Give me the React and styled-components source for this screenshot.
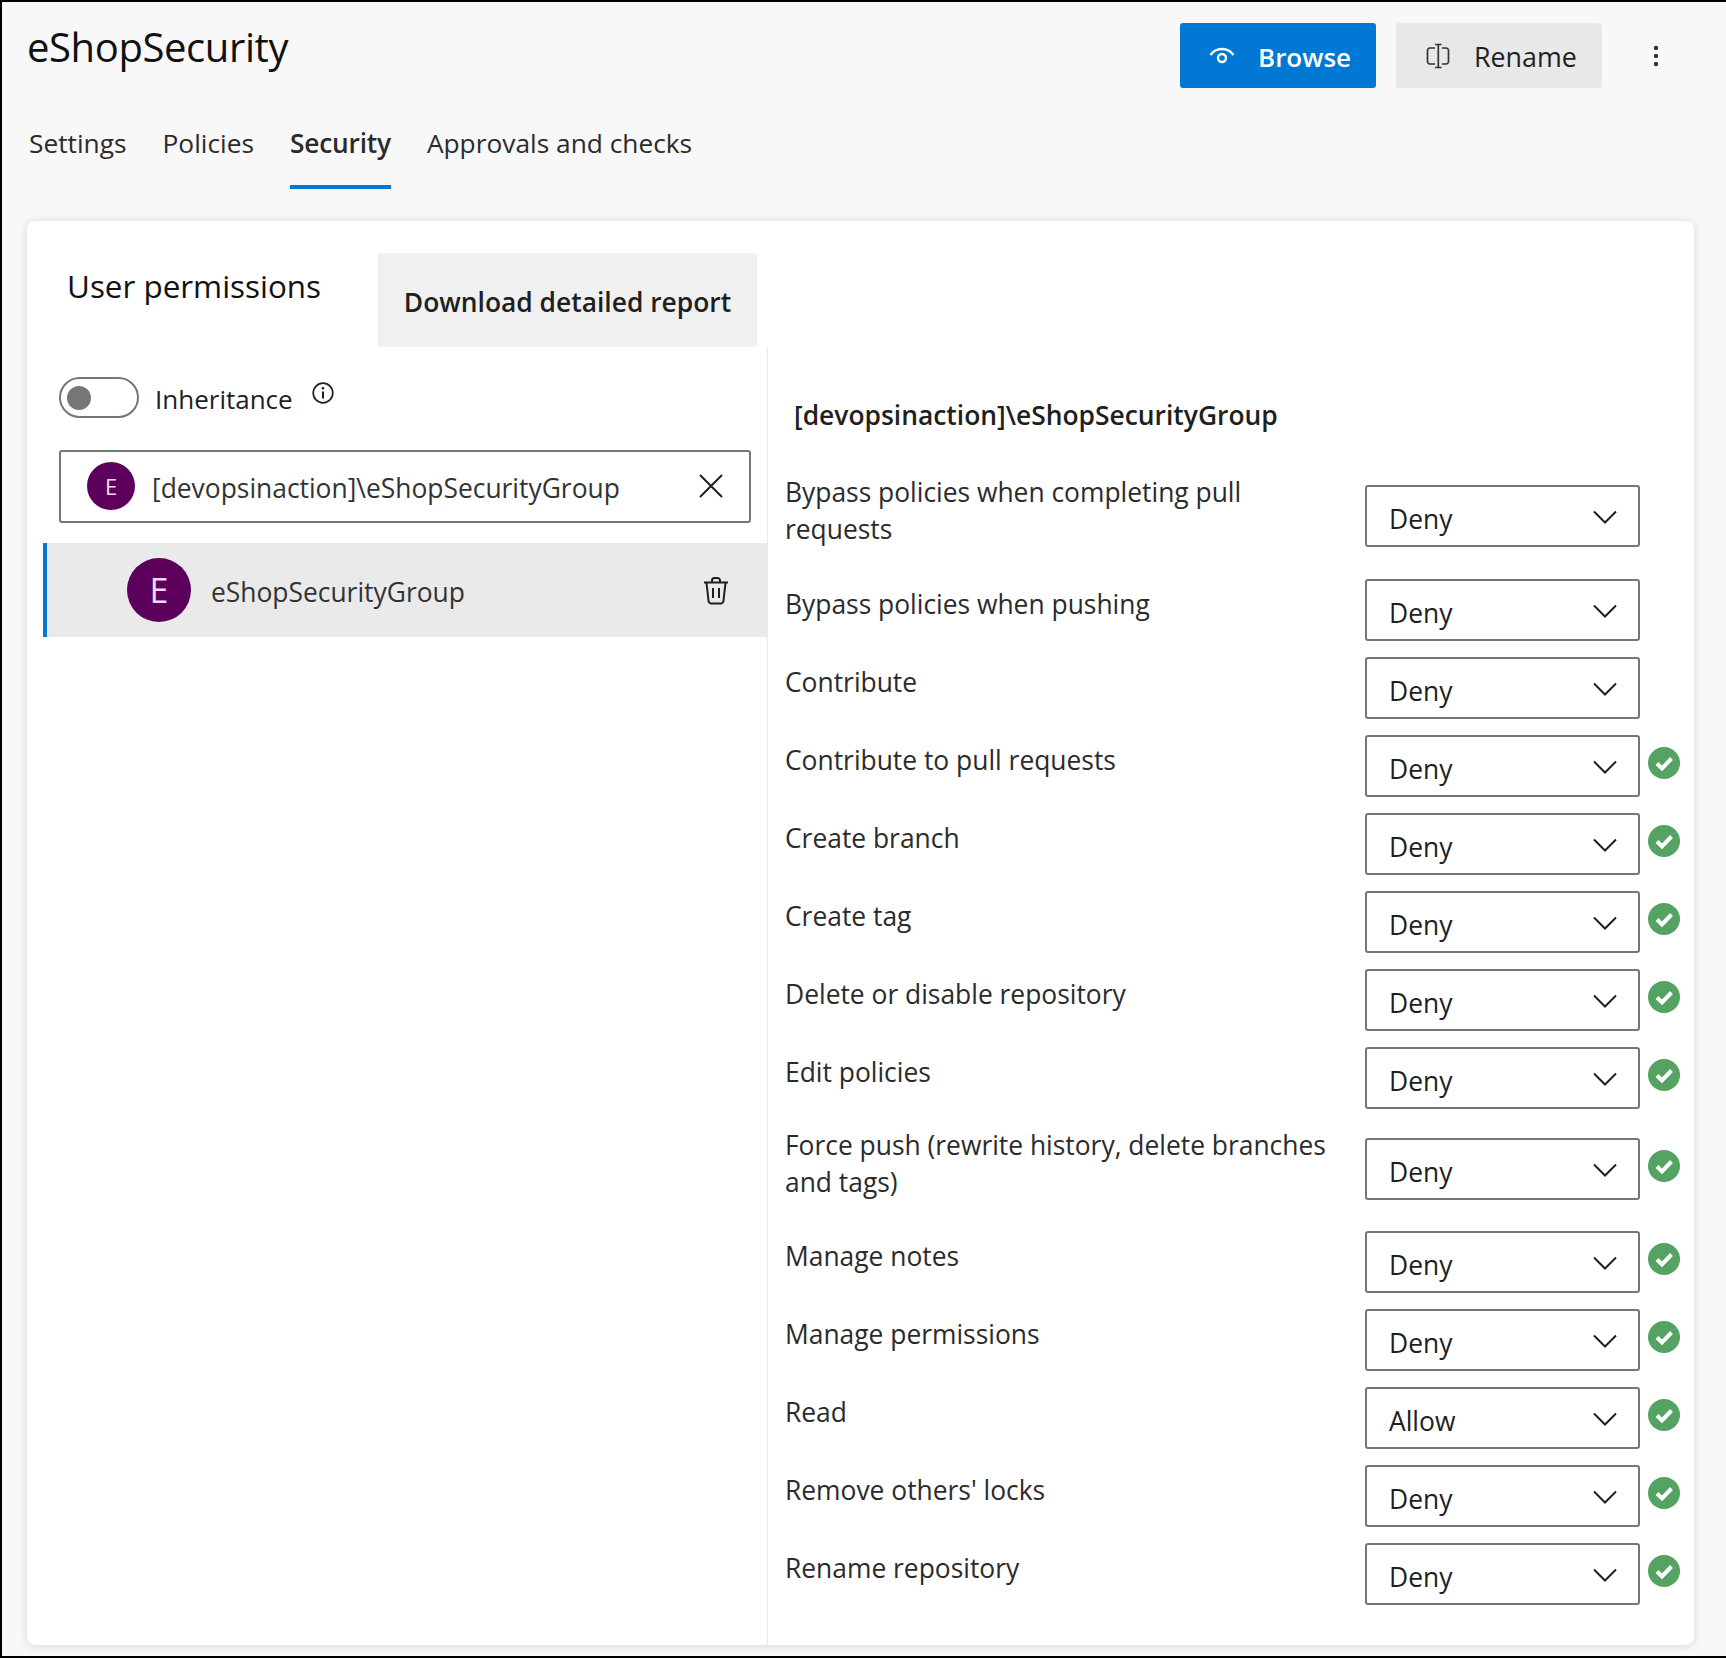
import React from "react";
import styled, { createGlobalStyle } from "styled-components";

const Global = createGlobalStyle`
  * { box-sizing: border-box; }
  html, body { margin: 0; padding: 0; }
  body { font-family: "Open Sans", "Noto Sans", sans-serif; color: #201f1e; }
`;

const Page = styled.div`
  width: 1726px;
  height: 1658px;
  background: #f8f8f8;
  border: solid #000;
  border-width: 2px 0 2px 2px;
  display: flex;
  flex-direction: column;
  overflow: hidden;
`;
const Header = styled.header`
  display: flex;
  align-items: flex-start;
  padding: 21px 0 0 25px;
  height: 88px;
`;
const Title = styled.h1`
  margin: 0;
  font-size: 40px;
  line-height: 48px;
  font-weight: 500;
  color: #111;
  letter-spacing: -0.4px;
`;
const Actions = styled.div`
  margin-left: auto;
  display: flex;
  align-items: center;
`;
const ActionButton = styled.button`
  height: 65px;
  width: ${(p) => p.$w}px;
  margin-right: 20px;
  border: 0;
  border-radius: 3px;
  display: flex;
  align-items: center;
  padding: 0 0 0 ${(p) => p.$pad}px;
  gap: ${(p) => p.$gap}px;
  font: inherit;
  font-size: ${(p) => (p.$primary ? 26 : 26.8)}px;
  font-weight: ${(p) => (p.$primary ? 600 : 400)};
  background: ${(p) => (p.$primary ? "#0078d4" : "#e8e8e8")};
  color: ${(p) => (p.$primary ? "#fff" : "#201f1e")};
`;
const ActionText = styled.span`
  position: relative;
  top: 1px;
`;
const More = styled.div`
  width: 20px;
  margin: 0 60px 0 24px;
  display: flex;
  justify-content: center;
  height: 63px;
  align-items: center;
`;
const Tabs = styled.nav`
  display: flex;
  padding-left: 27px;
  margin-top: 11px;
  gap: 36px;
`;
const Tab = styled.div`
  height: 88px;
  padding-top: 22px;
  font-size: 26.3px;
  line-height: 40px;
  font-weight: ${(p) => (p.$active ? 600 : 400)};
  letter-spacing: ${(p) => (p.$active ? "-0.2px" : "0")};
  color: #2b2b2b;
  border-bottom: 4px solid ${(p) => (p.$active ? "#0078d4" : "transparent")};
`;
const Card = styled.section`
  margin: 32px 0 0 25px;
  width: 1667px;
  height: 1424px;
  background: #fff;
  border-radius: 8px;
  box-shadow: 0 1px 8px rgba(0, 0, 0, 0.14);
  padding: 32px 0 0 16px;
  display: flex;
  flex-direction: column;
`;
const TopRow = styled.div`
  display: flex;
  height: 94px;
`;
const Heading = styled.h2`
  margin: 12px 0 0 24px;
  width: 311px;
  font-size: 31.4px;
  line-height: 42px;
  font-weight: 400;
  color: #111;
`;
const Download = styled.button`
  width: 379px;
  height: 94px;
  border: 0;
  border-radius: 3px;
  padding: 3px 0 0;
  background: #f0f0f0;
  font: inherit;
  font-size: 26.4px;
  font-weight: 600;
  color: #201f1e;
`;
const Body = styled.div`
  flex: 1;
  display: flex;
  min-height: 0;
`;
const Left = styled.div`
  width: 725px;
  border-right: 1px solid #eaeaea;
  padding-top: 30px;
`;
const ToggleRow = styled.div`
  display: flex;
  align-items: center;
  padding-left: 16px;
  height: 41px;
`;
const Toggle = styled.div`
  width: 80px;
  height: 41px;
  border: 2px solid #767676;
  border-radius: 21px;
  padding: 7px 0 0 6px;
`;
const Knob = styled.div`
  width: 24px;
  height: 24px;
  border-radius: 50%;
  background: #767676;
`;
const ToggleLabel = styled.span`
  margin-left: 16px;
  font-size: 26px;
  line-height: 41px;
  position: relative;
  top: 2px;
`;
const InfoWrap = styled.span`
  margin-left: 19px;
  display: flex;
  position: relative;
  top: -5px;
`;
const SearchBox = styled.div`
  margin: 32px 0 0 16px;
  width: 692px;
  height: 73px;
  border: 2px solid #767676;
  border-radius: 3px;
  display: flex;
  align-items: center;
  padding: 0 0 1px 26px;
`;
const Avatar = styled.div`
  width: ${(p) => p.$size}px;
  height: ${(p) => p.$size}px;
  border-radius: 50%;
  background: #5c005c;
  color: #f0dcf0;
  font-size: ${(p) => p.$font}px;
  display: flex;
  align-items: center;
  justify-content: center;
  flex: none;
`;
const SearchText = styled.span`
  margin-left: 17px;
  flex: 1;
  font-size: 26.4px;
  position: relative;
  top: 2px;
  color: #333;
`;
const IconButton = styled.span`
  display: flex;
  margin-right: ${(p) => p.$right}px;
  position: relative;
  top: ${(p) => p.$top || 0}px;
`;
const ListItem = styled.div`
  margin-top: 20px;
  height: 94px;
  background: #eaeaea;
  border-left: 4px solid #0078d4;
  display: flex;
  align-items: center;
  padding-left: 80px;
`;
const ItemText = styled.span`
  margin-left: 20px;
  flex: 1;
  font-size: 26.4px;
  position: relative;
  top: 2px;
  color: #333;
`;
const Right = styled.div`
  flex: 1;
  padding: 50px 0 0 17px;
`;
const GroupName = styled.h3`
  margin: 0 0 40px 9px;
  font-size: 26.4px;
  line-height: 37px;
  font-weight: 600;
  color: #201f1e;
`;
const Rows = styled.div`
  display: flex;
  flex-direction: column;
  gap: 16px;
`;
const Row = styled.div`
  display: flex;
  align-items: flex-start;
  padding-bottom: ${(p) => p.$bottom}px;
`;
const Label = styled.div`
  width: 580px;
  padding-right: 25px;
  margin-top: ${(p) => p.$top}px;
  font-size: 26.4px;
  line-height: 37px;
  color: #2b2b2b;
`;
const Select = styled.div`
  width: 275px;
  height: 62px;
  margin-top: ${(p) => p.$top}px;
  border: 2px solid #767676;
  border-radius: 3px;
  display: flex;
  align-items: center;
  justify-content: space-between;
  padding: 0 21px 0 22px;
  font-size: 26.4px;
  color: #201f1e;
`;
const SelectValue = styled.span`
  position: relative;
  top: 3px;
`;
const ChevronWrap = styled.span`
  display: flex;
  position: relative;
  top: 1px;
`;
const Status = styled.span`
  margin: ${(p) => p.$top}px 0 0 8px;
  display: flex;
`;

const Chevron = () => (
  <ChevronWrap>
    <svg width="24" height="14" viewBox="0 0 24 14" fill="none" stroke="#201f1e" strokeWidth="2">
      <path d="M1 1.5 L12 12.5 L23 1.5" />
    </svg>
  </ChevronWrap>
);
const CheckBadge = () => (
  <svg width="32" height="32" viewBox="0 0 32 32">
    <circle cx="16" cy="16" r="16" fill="#55a362" />
    <path d="M9 16.5 L14 21.5 L23.5 11.5" fill="none" stroke="#fff" strokeWidth="4" />
  </svg>
);
const Eye = () => (
  <svg width="26" height="20" viewBox="0 0 26 20" fill="none" stroke="#fff" strokeWidth="2.4">
    <path d="M1.5 9 C7 1 19 1 24.5 9" />
    <circle cx="13" cy="12" r="4" />
  </svg>
);
const RenameIcon = () => (
  <svg width="26" height="26" viewBox="0 0 26 26" fill="none" stroke="#333" strokeWidth="1.7">
    <path d="M10 5 H5 a2.5 2.5 0 0 0 -2.5 2.5 V18.5 a2.5 2.5 0 0 0 2.5 2.5 H10" />
    <path d="M17 5 H21 a2.5 2.5 0 0 1 2.5 2.5 V18.5 a2.5 2.5 0 0 1 -2.5 2.5 H17" />
    <path d="M10 1.5 H16.5 M13.3 1.5 V24.5 M10 24.5 H16.5" />
  </svg>
);
const Dots = () => (
  <svg width="6" height="22" viewBox="0 0 6 22" fill="#333">
    <circle cx="3" cy="3" r="2.2" />
    <circle cx="3" cy="11" r="2.2" />
    <circle cx="3" cy="19" r="2.2" />
  </svg>
);
const Info = () => (
  <svg width="22" height="22" viewBox="0 0 22 22" fill="none" stroke="#201f1e" strokeWidth="1.7">
    <circle cx="11" cy="11" r="9.8" />
    <path d="M11 9.5 V16.5" strokeWidth="2" />
    <circle cx="11" cy="6.3" r="1.3" fill="#201f1e" stroke="none" />
  </svg>
);
const Close = () => (
  <svg width="24" height="24" viewBox="0 0 24 24" fill="none" stroke="#201f1e" strokeWidth="2">
    <path d="M1 1 L23 23 M23 1 L1 23" />
  </svg>
);
const Trash = () => (
  <svg width="26" height="28" viewBox="0 0 26 28" fill="none" stroke="#201f1e" strokeWidth="2">
    <path d="M1 5.5 H25" />
    <path d="M9 5 V3.5 a2.5 2.5 0 0 1 2.5 -2.5 H14.5 a2.5 2.5 0 0 1 2.5 2.5 V5" />
    <path d="M3.5 6 L5.5 23.5 a3 3 0 0 0 3 3 H17.5 a3 3 0 0 0 3 -3 L22.5 6" />
    <path d="M10 11 V21 M16 11 V21" />
  </svg>
);

const single = { labelTop: 7, selectTop: 0, bottom: 0 };
const permissions = [
  { name: "Bypass policies when completing pull requests", value: "Deny", labelTop: 0, selectTop: 11, bottom: 15 },
  { name: "Bypass policies when pushing", value: "Deny", ...single },
  { name: "Contribute", value: "Deny", ...single },
  { name: "Contribute to pull requests", value: "Deny", ok: true, ...single },
  { name: "Create branch", value: "Deny", ok: true, ...single },
  { name: "Create tag", value: "Deny", ok: true, ...single },
  { name: "Delete or disable repository", value: "Deny", ok: true, ...single },
  { name: "Edit policies", value: "Deny", ok: true, ...single },
  { name: "Force push (rewrite history, delete branches and tags)", value: "Deny", ok: true, labelTop: 2, selectTop: 13, bottom: 14 },
  { name: "Manage notes", value: "Deny", ok: true, ...single },
  { name: "Manage permissions", value: "Deny", ok: true, ...single },
  { name: "Read", value: "Allow", ok: true, ...single },
  { name: "Remove others' locks", value: "Deny", ok: true, ...single },
  { name: "Rename repository", value: "Deny", ok: true, ...single },
];

export default function App() {
  return (
    <Page>
      <Global />
      <Header>
        <Title>eShopSecurity</Title>
        <Actions>
          <ActionButton $primary $w={196} $pad={29} $gap={23}>
            <Eye />
            <ActionText>Browse</ActionText>
          </ActionButton>
          <ActionButton $w={206} $pad={29} $gap={23}>
            <RenameIcon />
            <ActionText>Rename</ActionText>
          </ActionButton>
          <More>
            <Dots />
          </More>
        </Actions>
      </Header>
      <Tabs>
        <Tab>Settings</Tab>
        <Tab>Policies</Tab>
        <Tab $active>Security</Tab>
        <Tab>Approvals and checks</Tab>
      </Tabs>
      <Card>
        <TopRow>
          <Heading>User permissions</Heading>
          <Download>Download detailed report</Download>
        </TopRow>
        <Body>
          <Left>
            <ToggleRow>
              <Toggle>
                <Knob />
              </Toggle>
              <ToggleLabel>Inheritance</ToggleLabel>
              <InfoWrap>
                <Info />
              </InfoWrap>
            </ToggleRow>
            <SearchBox>
              <Avatar $size={48} $font={22}>E</Avatar>
              <SearchText>[devopsinaction]\eShopSecurityGroup</SearchText>
              <IconButton $right={26}>
                <Close />
              </IconButton>
            </SearchBox>
            <ListItem>
              <Avatar $size={64} $font={34}>E</Avatar>
              <ItemText>eShopSecurityGroup</ItemText>
              <IconButton $right={38} $top={1}>
                <Trash />
              </IconButton>
            </ListItem>
          </Left>
          <Right>
            <GroupName>[devopsinaction]\eShopSecurityGroup</GroupName>
            <Rows>
              {permissions.map((p) => (
                <Row key={p.name} $bottom={p.bottom}>
                  <Label $top={p.labelTop}>{p.name}</Label>
                  <Select $top={p.selectTop}>
                    <SelectValue>{p.value}</SelectValue>
                    <Chevron />
                  </Select>
                  {p.ok && (
                    <Status $top={p.selectTop + 12}>
                      <CheckBadge />
                    </Status>
                  )}
                </Row>
              ))}
            </Rows>
          </Right>
        </Body>
      </Card>
    </Page>
  );
}
